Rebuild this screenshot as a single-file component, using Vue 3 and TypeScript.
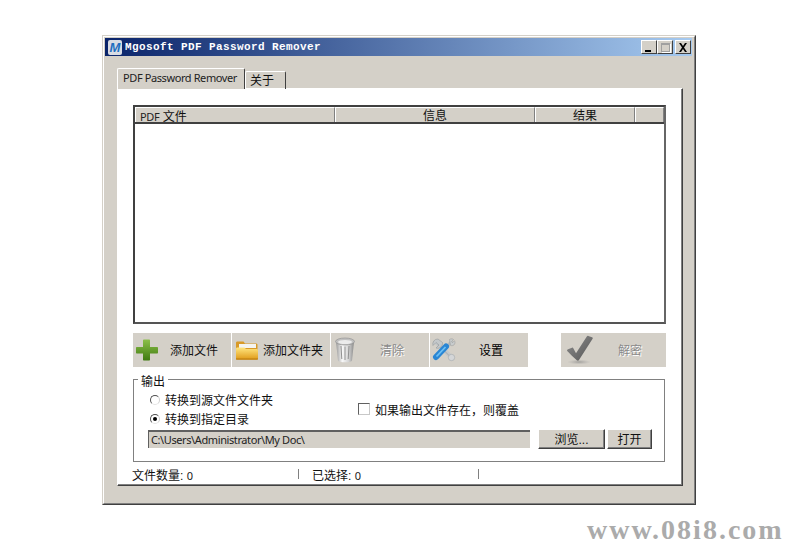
<script setup lang="ts">
interface Col { label: string; width: number; prefix?: string; left?: boolean }
const cols: Col[] = [
  { prefix: 'PDF', label: ' 文件', width: 200, left: true },
  { label: '信息', width: 200 },
  { label: '结果', width: 100 },
  { label: '', width: 29 },
]
</script>

<template>
  <div class="page">
    <div class="window">
      <div class="window-in">
        <div class="titlebar">
          <span class="app-icon"><span>M</span></span>
          <span class="title">Mgosoft PDF Password Remover</span>
          <span class="wbtns">
            <span class="wbtn"><i class="min"></i></span>
            <span class="wbtn"><i class="max"></i></span>
            <span class="wbtn close">
              <svg width="10" height="9" viewBox="0 0 10 9"><path d="M1 0h2l2 3 2-3h2L6 4.500 9 9H7L5 6 3 9H1l3-4.500z" fill="#000"/></svg>
            </span>
          </span>
        </div>

        <div class="tabs">
          <div class="tab active">PDF Password Remover</div>
          <div class="tab">关于</div>
        </div>

        <div class="pane">
          <div class="list">
            <div class="list-head">
              <div v-for="c in cols" :key="c.width + c.label" class="cell" :class="{ left: c.left }" :style="{ width: c.width + 'px' }"><span v-if="c.prefix" class="lat">{{ c.prefix }}</span>{{ c.label }}</div>
            </div>
          </div>

          <div class="toolbar">
            <div class="tb w98">
              <span class="tb-ic">
                <svg width="24" height="24" viewBox="0 0 24 24"><defs><linearGradient id="gp" x1="0" y1="0" x2="0" y2="1"><stop offset="0" stop-color="#8cc04a"/><stop offset="1" stop-color="#3f7a10"/></linearGradient></defs><path d="M8 2.500c0-.8.500-1 1-1h5c.6 0 1 .3 1 1V9h7c.6 0 1 .4 1 1v4.500c0 .6-.4 1-1 1h-7v6c0 .6-.4 1-1 1H9c-.6 0-1-.4-1-1v-6H2c-.6 0-1-.4-1-1V10c0-.6.400-1 1-1h6z" fill="url(#gp)"/></svg>
              </span>
              <span class="tb-label">添加文件</span>
            </div>
            <div class="tb w98">
              <span class="tb-ic">
                <svg width="24" height="24" viewBox="0 0 24 24"><defs><linearGradient id="gf" x1="0" y1="0" x2="0" y2="1"><stop offset="0" stop-color="#ffe680"/><stop offset="1" stop-color="#e09a18"/></linearGradient></defs><path d="M2 5c0-1 .5-1.500 1.500-1.500h6L11 5.500h11c1 0 1.500.5 1.500 1.500v13c0 1-.5 1.500-1.500 1.500H3.500C2.500 21.500 2 21 2 20z" fill="#d89a28"/><path d="M5 6h17v4H5z" fill="#f4f4f0"/><path d="M2 20V11c0-1 .5-1.500 1.500-1.500h7l1.500 1.500h10.500c1 0 1.500.5 1.500 1.500V20c0 1-.5 1.500-1.500 1.500h-19C2.500 21.500 2 21 2 20z" fill="url(#gf)"/><path d="M2 20.500h22v1H2z" fill="#b87a10"/></svg>
              </span>
              <span class="tb-label">添加文件夹</span>
            </div>
            <div class="tb w98 off">
              <span class="tb-ic">
                <svg width="24" height="26" viewBox="0 0 24 26"><defs><linearGradient id="gt" x1="0" y1="0" x2="1" y2="0"><stop offset="0" stop-color="#9a9a9a"/><stop offset=".35" stop-color="#f8f8f8"/><stop offset=".7" stop-color="#d4d4d4"/><stop offset="1" stop-color="#8a8a8a"/></linearGradient></defs><path d="M3 5l2 18.500c.2 1 3 1.800 7 1.800s6.800-.8 7-1.800L21 5z" fill="url(#gt)"/><ellipse cx="12" cy="4.500" rx="9.500" ry="3.500" fill="#c0c0c0" stroke="#8c8c8c" stroke-width=".6"/><ellipse cx="12" cy="5" rx="7" ry="2" fill="#ececec"/><path d="M8 9l.8 13M12 9.500V23M16 9l-.8 13" stroke="#909090" stroke-width="1"/></svg>
              </span>
              <span class="tb-label">清除</span>
            </div>
            <div class="tb w98">
              <span class="tb-ic">
                <svg width="24" height="24" viewBox="0 0 24 24"><path d="M5 5L19 19" stroke="#c4c8ca" stroke-width="4.500" stroke-linecap="round"/><path d="M19 19.500L6 6.500" stroke="#8e9498" stroke-width=".6"/><circle cx="19.500" cy="19.500" r="3.200" fill="#d4d6d8" stroke="#989ea2" stroke-width=".5"/><path d="M6 1a5 5 0 0 0-5 6.500L4 4.500 7 7 4 10a5 5 0 0 0 6.500-5.500z" fill="#c4c8ca" stroke="#8a9094" stroke-width=".5"/><path d="M14 9.500L20 3" stroke="#b4babd" stroke-width="3"/><path d="M17.500 1.500c1-.8 3-1 4 0l-2 2.200 1 1 2-2c.8 1.200.6 3-.3 4-1 1-2.500 1.200-3.700.7z" fill="#c8cccd" stroke="#888" stroke-width=".4"/><path d="M14 8.500L4 19" stroke="#2a86d4" stroke-width="6" stroke-linecap="round"/><path d="M13.500 9L4.500 18.500" stroke="#6cc0f4" stroke-width="1.800"/></svg>
              </span>
              <span class="tb-label dark">设置</span>
            </div>
            <div class="tb decrypt off">
              <span class="tb-ic wide">
                <svg width="28" height="30" viewBox="0 0 28 30"><defs><linearGradient id="gc" x1="0" y1="0" x2="1" y2="1"><stop offset="0" stop-color="#8e8e8e"/><stop offset="1" stop-color="#555"/></linearGradient><radialGradient id="gs"><stop offset="0" stop-color="#777" stop-opacity=".55"/><stop offset="1" stop-color="#999" stop-opacity="0"/></radialGradient></defs><ellipse cx="13" cy="27" rx="12" ry="2.500" fill="url(#gs)"/><path d="M1 15.500c0-.6.500-1 1-1.200l4-1.600c.6-.2 1 0 1.300.5l2.700 5L20.800 1.500c.4-.6.900-.8 1.500-.6l3.700 1.300c.8.300 1 .9.600 1.600L13 25c-.5.800-1.500.9-2.200.3-3.500-3-6.500-6-9.300-9-.3-.2-.5-.5-.5-.8z" fill="url(#gc)"/></svg>
              </span>
              <span class="tb-label">解密</span>
            </div>
          </div>

          <fieldset class="output">
            <legend>输出</legend>
            <div class="opts">
              <div class="radios">
                <label class="opt"><span class="radio"></span>转换到源文件文件夹</label>
                <label class="opt"><span class="radio on"></span>转换到指定目录</label>
              </div>
              <label class="opt chk"><span class="check"></span>如果输出文件存在，则覆盖</label>
            </div>
            <div class="path-row">
              <div class="path">C:\Users\Administrator\My Doc\</div>
              <div class="btn browse">浏览...</div>
              <div class="btn open">打开</div>
            </div>
          </fieldset>

          <div class="status">
            <span class="s1">文件数量: <b>0</b></span>
            <span class="s2">已选择: <b>0</b></span>
            <span class="s3"></span>
          </div>
        </div>
      </div>
    </div>
    <div class="mark">www.08i8.com</div>
  </div>
</template>

<style>
html, body { margin: 0; background: #fff; }
</style>

<style scoped>
.page {
  position: relative;
  width: 802px;
  height: 548px;
  padding: 35px 0 0 102px;
  box-sizing: border-box;
  overflow: hidden;
  background: #fff;
  font-family: "Liberation Sans", "Noto Sans CJK SC", sans-serif;
  font-size: 12px;
  color: #111;
}
.window {
  width: 594px;
  height: 470px;
  box-sizing: border-box;
  border: 1px solid;
  border-color: #d4d0c8 #404040 #404040 #d4d0c8;
  background: #d4d0c8;
}
.window-in {
  height: 100%;
  box-sizing: border-box;
  border: 1px solid;
  border-color: #fff #808080 #808080 #fff;
  padding: 1px 2px 0 1px;
}
.titlebar {
  height: 18px;
  display: flex;
  align-items: center;
  background: linear-gradient(90deg, #0a246a, #a6caf0);
}
.app-icon {
  width: 14px;
  height: 15px;
  margin-left: 3px;
  background: #d8dce4;
  display: flex;
  align-items: center;
  justify-content: center;
  border-radius: 2px;
}
.app-icon span {
  font: italic bold 13px "Liberation Sans", sans-serif;
  color: #1f6fc0;
}
.title {
  margin-left: 3px;
  font: bold 11px "Liberation Mono", monospace;
  letter-spacing: 0.4px;
  color: #fff;
  white-space: nowrap;
}
.wbtns {
  margin-left: auto;
  display: flex;
  padding-right: 1px;
}
.wbtn {
  width: 16px;
  height: 14px;
  box-sizing: border-box;
  background: #d4d0c8;
  border: 1px solid;
  border-color: #fff #404040 #404040 #fff;
  display: flex;
  align-items: center;
  justify-content: center;
  position: relative;
}
.wbtn.close { margin-left: 2px; }
.min { width: 6px; height: 2px; background: #000; margin-top: 7px; margin-right: 2px; }
.max { width: 9px; height: 9px; box-sizing: border-box; border: 1px solid #a0a0a0; border-top-width: 2px; box-shadow: 1px 1px 0 #fff; }

.tabs {
  display: flex;
  align-items: flex-end;
  height: 21px;
  margin: 12px 0 -1px 12px;
  position: relative;
  z-index: 1;
}
.tab {
  box-sizing: border-box;
  height: 18px;
  padding: 1px 4px 0 4px;
  width: 41px;
  border: 1px solid;
  border-color: #fff #404040 transparent #fff;
  border-bottom: 0;
  border-radius: 2px 2px 0 0;
  font-size: 12px;
  line-height: 16px;
  white-space: nowrap;
}
.tab.active {
  height: 21px;
  width: 128px;
  padding: 0 0 0 5px;
  font: 11px/17px "Noto Sans", sans-serif;
  letter-spacing: -0.4px;
  color: #222;
  background: #d4d0c8;
}
.pane {
  width: 566px;
  height: 398px;
  margin-left: 12px;
  box-sizing: border-box;
  background: #fff;
  border: 1px solid;
  border-color: #fff #404040 #404040 #fff;
  box-shadow: inset -1px -1px 0 #808080;
  padding: 16px 0 0 15px;
}
.list {
  width: 533px;
  height: 219px;
  box-sizing: border-box;
  border: 2px solid;
  border-color: #404040 #666 #555 #404040;
}
.list-head {
  display: flex;
  height: 15px;
  background: #d4d0c8;
  border-bottom: 2px solid #404040;
}
.cell {
  box-sizing: border-box;
  border: 1px solid;
  border-color: #fff #808080 transparent #fff;
  border-bottom: 0;
  text-align: center;
  font-size: 12px;
  line-height: 17px;
  height: 15px;
  white-space: nowrap;
}
.cell.left { text-align: left; padding-left: 4px; }
.lat { font: 11px/17px "Noto Sans", sans-serif; letter-spacing: -0.3px; color: #222; }

.toolbar {
  display: flex;
  gap: 1px;
  margin-top: 9px;
  width: 533px;
  height: 34px;
}
.tb {
  background: #d4d0c8;
  display: flex;
  align-items: center;
  height: 34px;
}
.w98 { width: 98px; }
.decrypt { width: 105px; margin-left: auto; }
.tb-ic {
  width: 24px;
  flex: none;
  padding-left: 2px;
  box-sizing: border-box;
  display: flex;
}
.tb-ic svg { flex: none; }
.tb-ic.wide { width: 33px; padding-left: 5px; }
.tb-label {
  flex: 1;
  text-align: center;
  white-space: nowrap;
  font-size: 12px;
  padding-bottom: 2px;
}
.tb-label.dark { color: #000; }
.off .tb-label { color: #8a8a8a; text-shadow: 1px 1px 0 #fff; }

.output {
  width: 532px;
  height: 93px;
  box-sizing: border-box;
  margin: 2px 0 0 0;
  padding: 0 0 0 14px;
  border: 1px solid #808080;
}
.output legend {
  margin-left: -10px;
  padding: 6px 3px 0 3px;
  font-size: 12px;
  line-height: 14px;
}
.opts {
  display: flex;
  align-items: center;
  height: 38px;
  margin-top: 1px;
}
.radios {
  display: flex;
  flex-direction: column;
  gap: 2px;
  width: 208px;
  margin-left: 2px;
}
.opt {
  display: flex;
  align-items: center;
  gap: 5px;
  height: 17px;
  white-space: nowrap;
  font-size: 12px;
}
.radio {
  width: 10px;
  height: 10px;
  box-sizing: border-box;
  border-radius: 50%;
  border: 1px solid;
  border-color: #505050 #d0d0d0 #e4e4e4 #505050;
  background: #fff;
  position: relative;
}
.radio.on::after {
  content: "";
  position: absolute;
  left: 2px;
  top: 2px;
  width: 4px;
  height: 4px;
  border-radius: 50%;
  background: #000;
}
.check {
  width: 12px;
  height: 12px;
  box-sizing: border-box;
  background: #fff;
  border: 1px solid;
  border-color: #606060 #c8c8c8 #c8c8c8 #606060;
}
.path-row {
  display: flex;
  align-items: center;
  margin-top: 1px;
}
.path {
  width: 382px;
  height: 18px;
  box-sizing: border-box;
  background: #d4d0c8;
  border-top: 2px solid #606060;
  border-left: 1px solid #606060;
  padding-left: 2px;
  font: 11px/15px "Noto Sans", sans-serif;
  letter-spacing: -0.4px;
  color: #222;
}
.btn {
  height: 20px;
  box-sizing: border-box;
  background: #d4d0c8;
  border: 1px solid;
  border-color: #fff #404040 #404040 #fff;
  box-shadow: inset -1px -1px 0 #808080;
  text-align: center;
  line-height: 20px;
  font-size: 12px;
}
.browse { width: 67px; margin-left: 8px; }
.open { width: 45px; margin-left: 2px; }

.status {
  display: flex;
  margin: 7px 0 0 -1px;
  height: 14px;
  line-height: 14px;
  font-size: 12px;
  white-space: nowrap;
}
.status b { font: 11px/14px "Noto Sans", sans-serif; color: #222; font-weight: 400; }
.s1 { width: 166px; border-right: 1px solid #808080; height: 10px; line-height: 14px; }
.s2 { width: 166px; margin-left: 13px; border-right: 1px solid #808080; height: 10px; line-height: 14px; }

.mark {
  position: absolute;
  left: 587px;
  top: 516px;
  font: bold 28px/28px "Liberation Serif", serif;
  letter-spacing: 2px;
  color: #ababab;
  white-space: nowrap;
}
</style>
